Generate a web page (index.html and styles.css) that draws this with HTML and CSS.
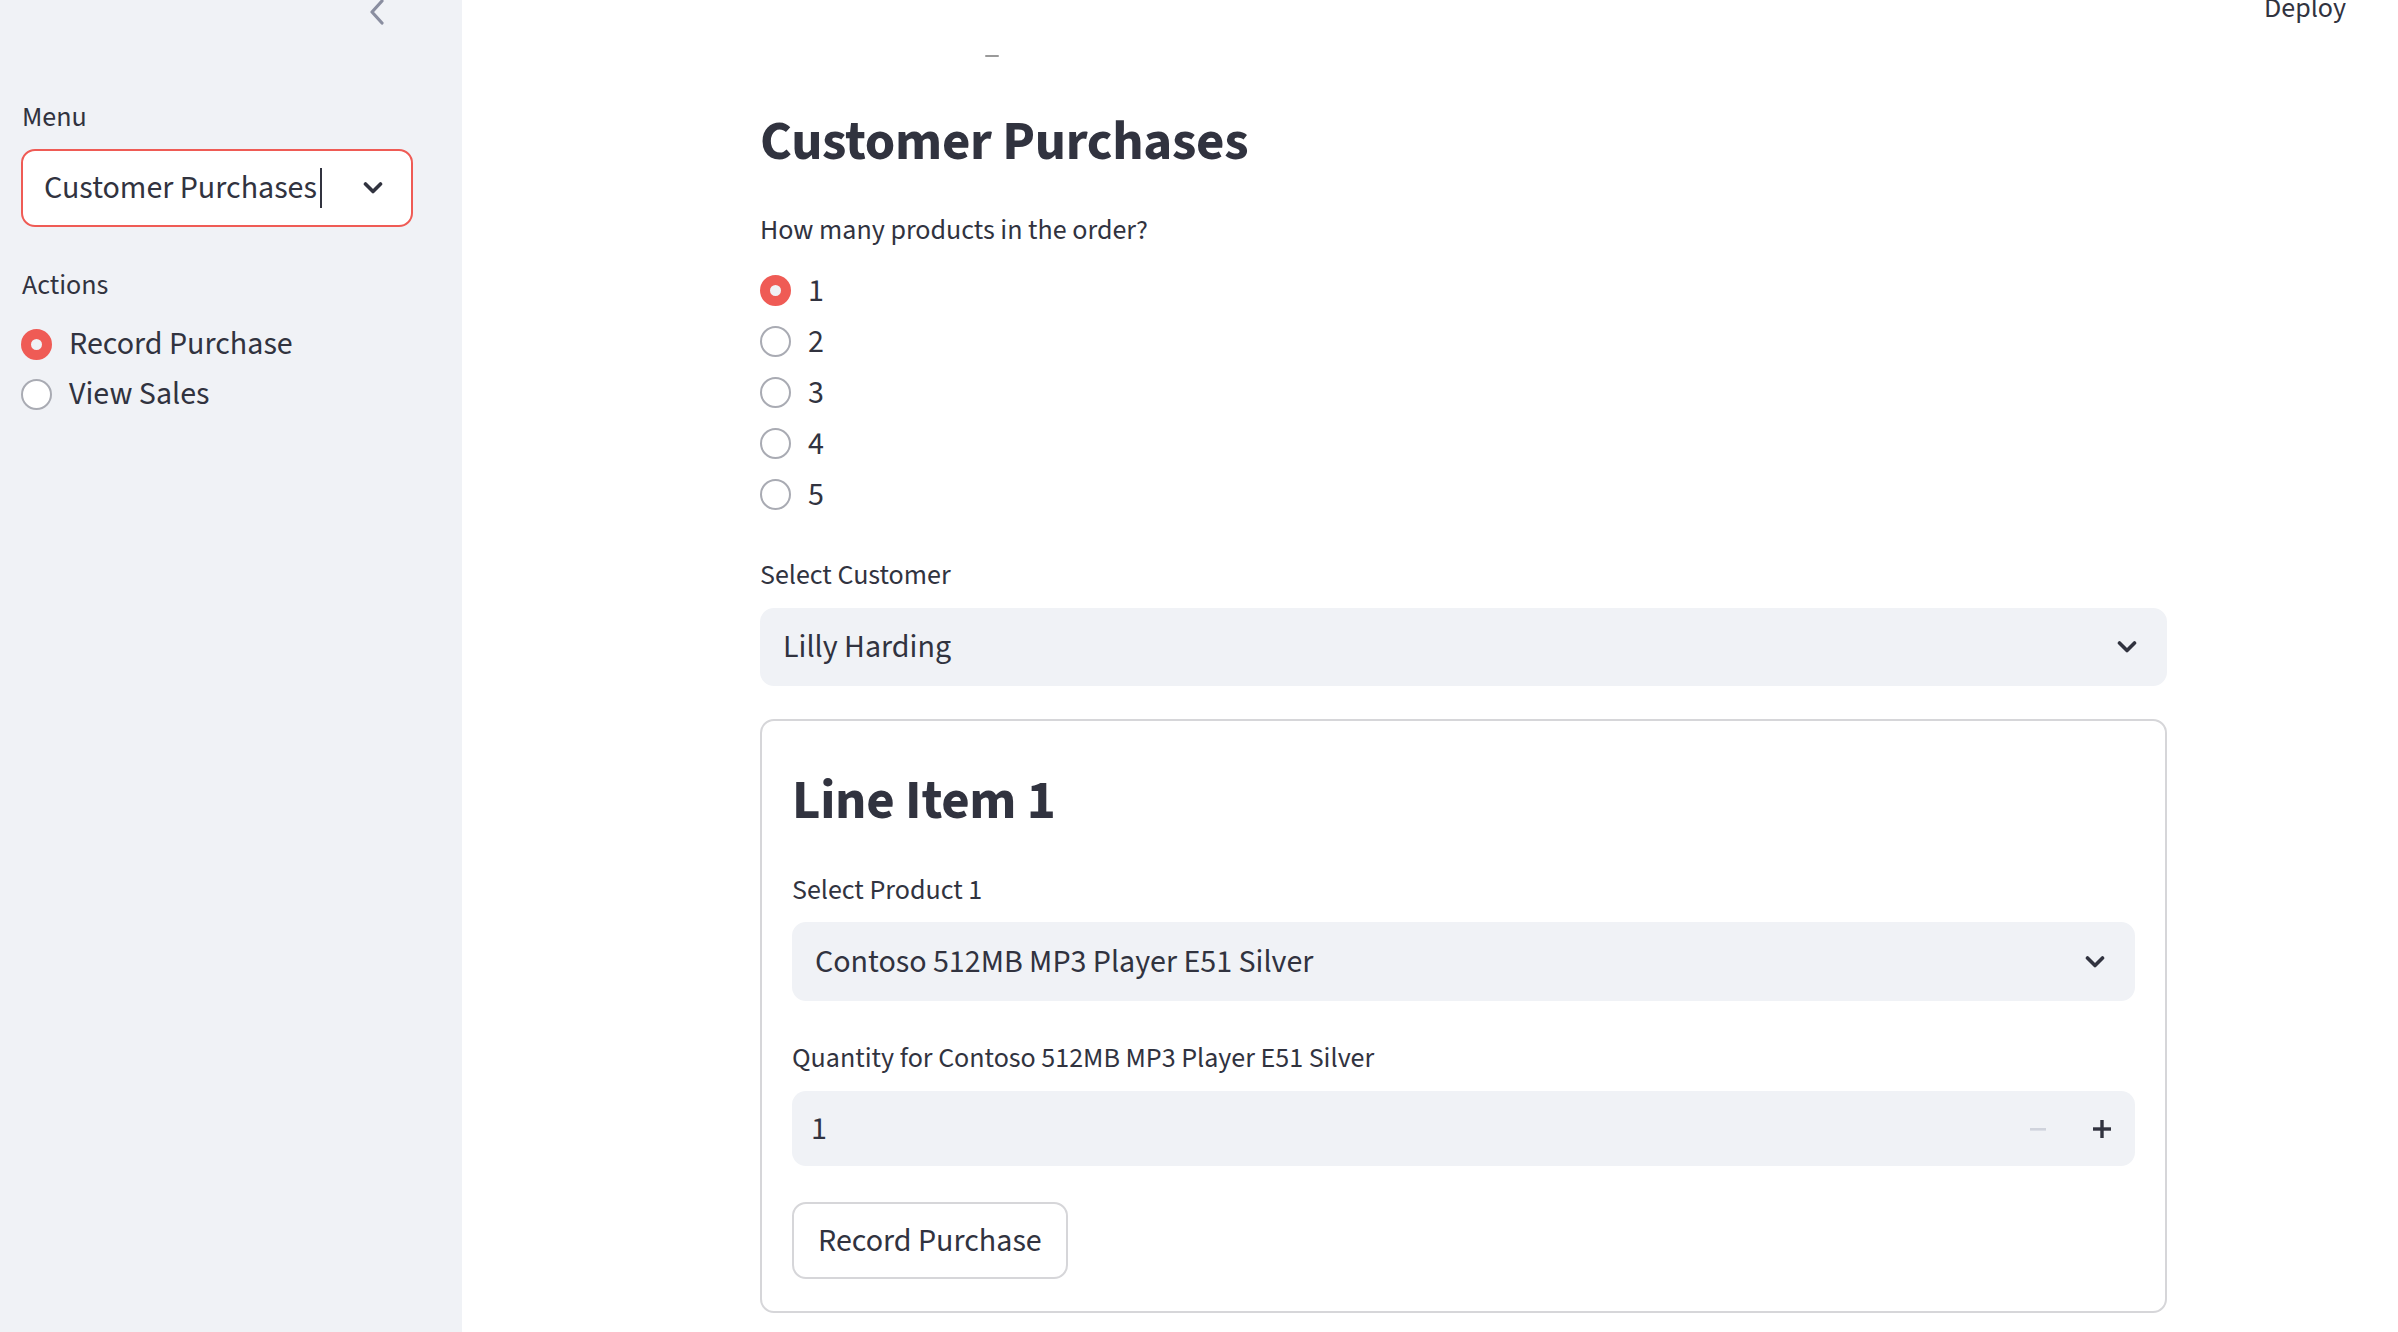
FILE: index.html
```html
<!DOCTYPE html>
<html lang="en">
<head>
<meta charset="utf-8">
<title>Customer Purchases</title>
<link rel="stylesheet" href="styles.css">
</head>
<body>
<div class="app">
  <aside class="sidebar">
    <button class="collapse" aria-label="Collapse sidebar">
      <svg width="16" height="26" viewBox="0 0 16 26"><path d="M13 2 L3 13 L13 24" fill="none" stroke="#8a8ea0" stroke-width="3.2" stroke-linecap="round" stroke-linejoin="round"/></svg>
    </button>
    <div class="label side-label">Menu</div>
    <div class="select select-active">
      <span class="select-value">Customer Purchases<span class="caret"></span></span>
      <svg class="chev" width="20" height="12" viewBox="0 0 20 12"><path d="M2.5 2 L10 9.5 L17.5 2" fill="none" stroke="#31333f" stroke-width="3.6" stroke-linecap="round" stroke-linejoin="round"/></svg>
    </div>
    <div class="label side-label actions-label">Actions</div>
    <div class="radio-group side-radios">
      <div class="radio-row"><span class="radio on"></span><span class="radio-text">Record Purchase</span></div>
      <div class="radio-row"><span class="radio"></span><span class="radio-text">View Sales</span></div>
    </div>
  </aside>
  <main class="main">
    <div class="header">
      <span class="deploy">Deploy</span>
    </div>
    <span class="dash"></span>
    <div class="content">
      <h1 class="title">Customer Purchases</h1>
      <div class="label q-label">How many products in the order?</div>
      <div class="radio-group main-radios">
        <div class="radio-row"><span class="radio on"></span><span class="radio-text">1</span></div>
        <div class="radio-row"><span class="radio"></span><span class="radio-text">2</span></div>
        <div class="radio-row"><span class="radio"></span><span class="radio-text">3</span></div>
        <div class="radio-row"><span class="radio"></span><span class="radio-text">4</span></div>
        <div class="radio-row"><span class="radio"></span><span class="radio-text">5</span></div>
      </div>
      <div class="label field-label">Select Customer</div>
      <div class="select select-grey">
        <span class="select-value">Lilly Harding</span>
        <svg class="chev" width="20" height="12" viewBox="0 0 20 12"><path d="M2.5 2 L10 9.5 L17.5 2" fill="none" stroke="#31333f" stroke-width="3.6" stroke-linecap="round" stroke-linejoin="round"/></svg>
      </div>
      <section class="card">
        <h2 class="card-title">Line Item 1</h2>
        <div class="label field-label first">Select Product 1</div>
        <div class="select select-grey">
          <span class="select-value">Contoso 512MB MP3 Player E51 Silver</span>
          <svg class="chev" width="20" height="12" viewBox="0 0 20 12"><path d="M2.5 2 L10 9.5 L17.5 2" fill="none" stroke="#31333f" stroke-width="3.6" stroke-linecap="round" stroke-linejoin="round"/></svg>
        </div>
        <div class="label field-label">Quantity for Contoso 512MB MP3 Player E51 Silver</div>
        <div class="number-input">
          <span class="number-value">1</span>
          <span class="step minus"><svg width="16" height="16" viewBox="0 0 16 16"><rect x="0" y="7" width="16" height="2.6" fill="#d0d3dc"/></svg></span>
          <span class="step plus"><svg width="18" height="18" viewBox="0 0 18 18"><rect x="0" y="7.3" width="18" height="3.4" fill="#31333f"/><rect x="7.3" y="0" width="3.4" height="18" fill="#31333f"/></svg></span>
        </div>
        <button class="btn">Record Purchase</button>
      </section>
    </div>
  </main>
</div>
</body>
</html>
```
FILE: styles.css
```css
* { box-sizing: border-box; }
html, body { margin: 0; padding: 0; }
body {
  font-family: "Source Sans Pro", "Source Sans 3", Lato, "Noto Sans", sans-serif;
  color: #31333f;
  background: #ffffff;
  width: 2398px;
  height: 1332px;
  overflow: hidden;
}
.app { display: flex; height: 1332px; }

.sidebar {
  position: relative;
  width: 462px;
  flex: none;
  background: #f0f2f6;
  padding: 100px 49px 0 21px;
}
.collapse {
  position: absolute;
  left: 369px;
  top: -1px;
  border: 0;
  padding: 0;
  background: transparent;
  line-height: 0;
}
.label { font-size: 28px; line-height: 34px; }
.side-label { padding-left: 1px; }
.actions-label { margin-top: 41px; }

.select {
  display: flex;
  align-items: center;
  justify-content: space-between;
  height: 78px;
  border-radius: 14px;
  padding: 0 28px 0 21px;
  font-size: 32px;
}
.select-active {
  margin-top: 15px;
  background: #ffffff;
  border: 2px solid #ef5b55;
}
.select-grey { background: #f0f2f6; border: 2px solid #f0f2f6; height: 78px; }
.select-value { display: flex; align-items: center; white-space: nowrap; }
.caret { display: inline-block; width: 2px; height: 40px; background: #31333f; margin-left: 3px; }
.chev { flex: none; }

.radio-group { display: flex; flex-direction: column; }
.side-radios { margin-top: 17px; }
.radio-row { display: flex; align-items: center; height: 50px; font-size: 32px; }
.main-radios .radio-row { height: 51px; }
.radio {
  width: 31px; height: 31px; border-radius: 50%;
  border: 2px solid #a9abb3;
  background: #ffffff;
  flex: none;
  margin-right: 17px;
}
.radio.on { border: 10px solid #ef5b55; background: #f0f2f6; }

.main { position: relative; flex: 1; }
.header {
  position: absolute;
  top: -9px;
  right: 52px;
  font-size: 28px;
  line-height: 34px;
}
.dash {
  position: absolute;
  left: 523px;
  top: 55px;
  width: 14px;
  height: 2px;
  border-radius: 1px;
  background: #9a9a9a;
}
.content {
  width: 1407px;
  margin-left: 298px;
  padding-top: 111px;
}
.title, .card-title {
  margin: 0;
  font-size: 55px;
  line-height: 62px;
  font-weight: 700;
  letter-spacing: -0.3px;
}
.q-label { margin-top: 40px; }
.main-radios { margin-top: 18px; }
.field-label { margin-top: 38px; }
.field-label + .select, .field-label + .number-input { margin-top: 16px; }

.card {
  margin-top: 33px;
  border: 2px solid #d6d6d9;
  border-radius: 14px;
  padding: 49px 30px 30px 30px;
  height: 594px;
}
.card .field-label.first { margin-top: 41px; }
.card .field-label { margin-top: 40px; }
.card .field-label.first + .select { margin-top: 15px; }
.card .select-grey { height: 79px; }

.number-input {
  display: flex;
  align-items: center;
  height: 75px;
  background: #f0f2f6;
  border-radius: 14px;
  padding: 0 13px 0 19px;
  font-size: 32px;
}
.number-value { flex: 1; }
.step { display: flex; align-items: center; justify-content: center; width: 40px; height: 40px; }
.minus { margin-right: 24px; }

.btn {
  display: block;
  margin-top: 36px;
  height: 77px;
  padding: 0 24px;
  background: #ffffff;
  border: 2px solid #d6d6d9;
  border-radius: 14px;
  font-family: inherit;
  font-size: 32px;
  color: #31333f;
}
```
